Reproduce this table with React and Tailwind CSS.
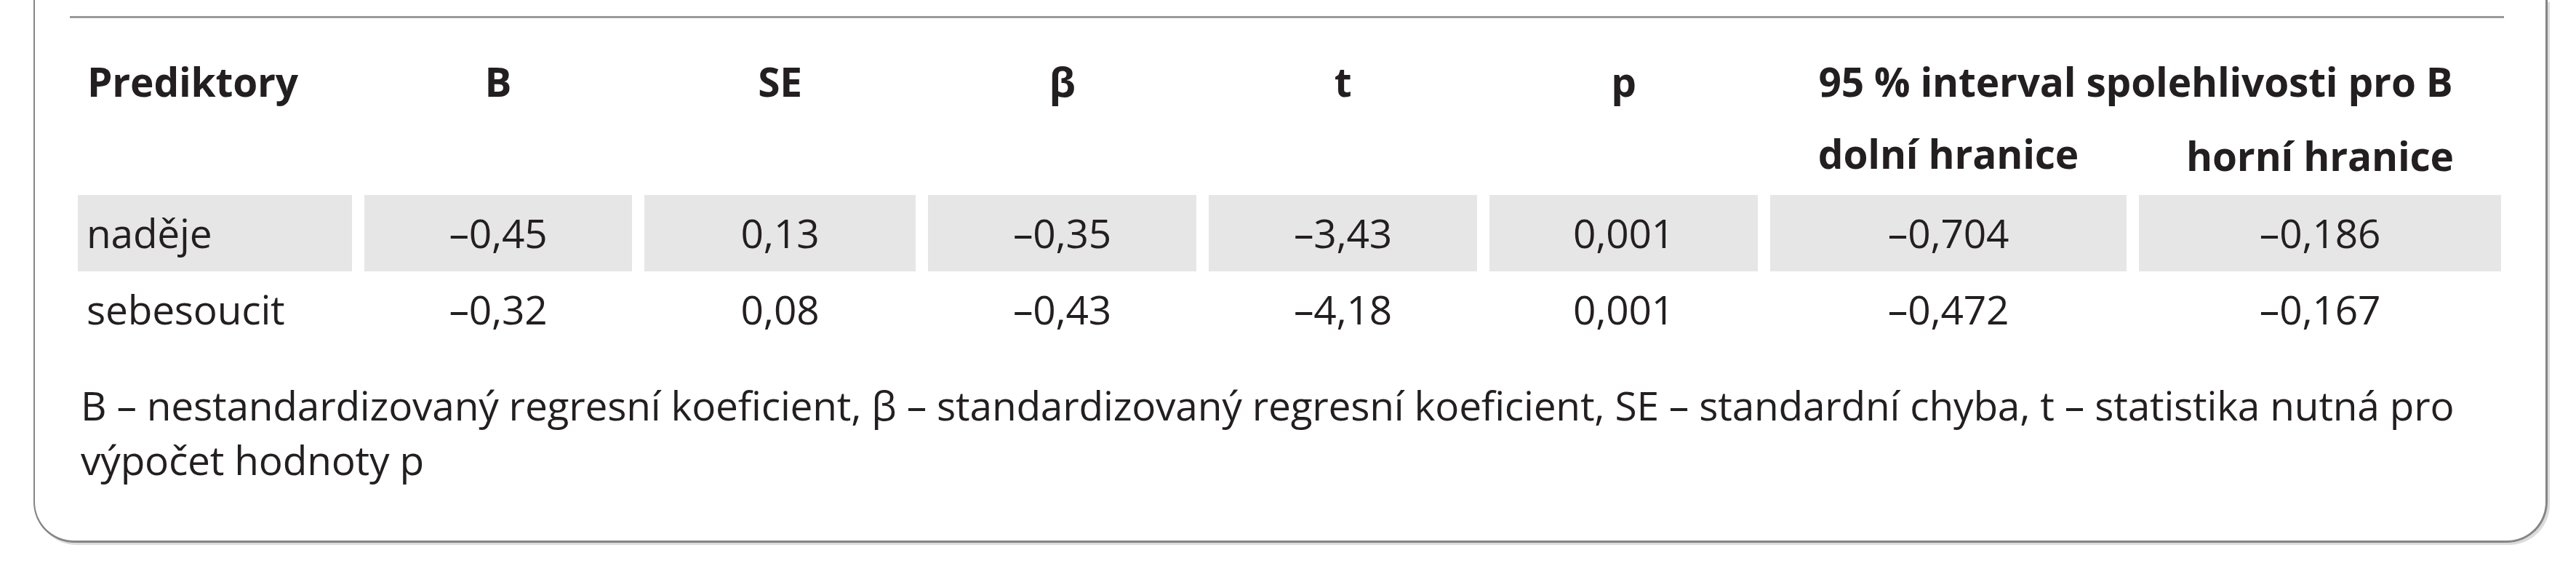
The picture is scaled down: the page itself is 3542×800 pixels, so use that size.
// Regression table card (cropped from a journal page)
const cols = "grid grid-cols-[377px_368px_373px_369px_369px_369px_490px_498px] gap-x-[17px]";

const rows = [
  { name: "naděje", vals: ["–0,45", "0,13", "–0,35", "–3,43", "0,001", "–0,704", "–0,186"], shaded: true },
  { name: "sebesoucit", vals: ["–0,32", "0,08", "–0,43", "–4,18", "0,001", "–0,472", "–0,167"], shaded: false },
];

export default function App() {
  return (
    <div className="h-[800px] bg-white text-[#231f20] font-['Open_Sans',sans-serif] [font-stretch:92%] text-[55px] leading-[75px] tracking-[-0.2px]">
      <div className="ml-[46px] w-[3457px] h-[746px] border-l-2 border-r-[3px] border-b-[3px] border-[#858585] rounded-b-[56px] shadow-[3px_3px_0_#dcdcdc]">
        <div className="ml-[48px] w-[3347px] pt-[22px]">
          <div className="border-t-[3px] border-[#9a9a9a]" />

          {/* header */}
          <div className={`${cols} mt-[49px] pl-[11px] font-bold`}>
            <div className="pl-[13px]">Prediktory</div>
            <div className="text-center">B</div>
            <div className="text-center">SE</div>
            <div className="text-center">β</div>
            <div className="text-center">t</div>
            <div className="text-center">p</div>
            <div className="col-span-2 text-center">95 % interval spolehlivosti pro B</div>
          </div>
          <div className={`${cols} mt-[24px] pl-[11px] font-bold`}>
            <div className="col-span-6" />
            <div className="text-center">dolní hranice</div>
            <div className="text-center pt-[3px]">horní hranice</div>
          </div>

          {/* data */}
          <div className="mt-[17px] pl-[11px]">
            {rows.map((r) => (
              <div key={r.name} className={cols}>
                <div className={`pl-[12px] pt-[14px] pb-[16px] ${r.shaded ? "bg-[#e6e6e7]" : ""}`}>{r.name}</div>
                {r.vals.map((v, i) => (
                  <div key={i} className={`text-center pt-[14px] pb-[16px] ${r.shaded ? "bg-[#e6e6e7]" : ""}`}>
                    {v}
                  </div>
                ))}
              </div>
            ))}
          </div>

          {/* note */}
          <p className="mt-[41px] pl-[15px] whitespace-nowrap">
            B – nestandardizovaný regresní koeficient, β – standardizovaný regresní koeficient, SE – standardní chyba, t – statistika nutná pro
            <br />
            výpočet hodnoty p
          </p>
        </div>
      </div>
    </div>
  );
}
